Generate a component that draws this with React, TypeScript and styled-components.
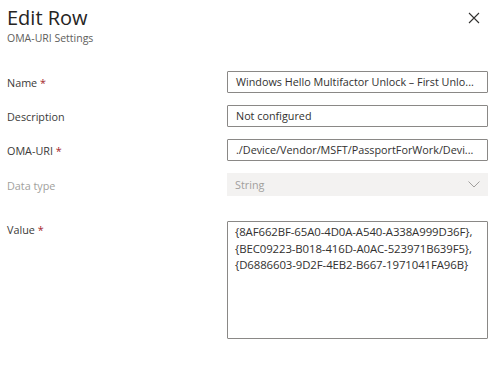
import React from "react";
import styled, { createGlobalStyle } from "styled-components";

const GlobalStyle = createGlobalStyle`
    html, body {
        margin: 0;
        padding: 0;
        background: #ffffff;
    }
    body {
        font-family: "Segoe UI", "Open Sans", "Noto Sans", sans-serif;
        color: #323130;
    }
`;

interface FieldRow {
    label: string;
    required?: boolean;
    disabled?: boolean;
    value: string;
    select?: boolean;
}

// values are shown as the panel shows them, already cut short
const rows: FieldRow[] = [
    { label: "Name", required: true, value: "Windows Hello Multifactor Unlock – First Unlo..." },
    { label: "Description", value: "Not configured" },
    { label: "OMA-URI", required: true, value: "./Device/Vendor/MSFT/PassportForWork/Devi..." },
    { label: "Data type", disabled: true, value: "String", select: true },
];

const guids = [
    "{8AF662BF-65A0-4D0A-A540-A338A999D36F},",
    "{BEC09223-B018-416D-A0AC-523971B639F5},",
    "{D6886603-9D2F-4EB2-B667-1971041FA96B}",
];

const App: React.FC = () => {
    return (
        <>
            <GlobalStyle />
            <Panel>
                <Header>
                    <Titles>
                        <Title>Edit Row</Title>
                        <Subtitle>OMA-URI Settings</Subtitle>
                    </Titles>
                    <CloseButton aria-label="Close">
                        <svg width="12" height="12" viewBox="0 0 12 12">
                            <path d="M1 1 L11 11 M11 1 L1 11" stroke="#323130" strokeWidth="1.1" fill="none" />
                        </svg>
                    </CloseButton>
                </Header>
                <Form>
                    {rows.map(({ label, required, disabled, value, select }) => (
                        <Row key={label}>
                            <Label disabled={disabled}>
                                {label}
                                {required && <Star> *</Star>}
                            </Label>
                            {select ? (
                                <SelectBox>
                                    <span>{value}</span>
                                    <svg width="12" height="7" viewBox="0 0 12 7">
                                        <path d="M0.5 0.5 L6 6 L11.5 0.5" stroke="#a19f9d" strokeWidth="1" fill="none" />
                                    </svg>
                                </SelectBox>
                            ) : (
                                <InputBox>{value}</InputBox>
                            )}
                        </Row>
                    ))}
                    <ValueRow>
                        <Label>
                            Value<Star> *</Star>
                        </Label>
                        <TextArea>
                            {guids.map(g => (
                                <div key={g}>{g}</div>
                            ))}
                        </TextArea>
                    </ValueRow>
                </Form>
            </Panel>
        </>
    );
};

const Panel = styled.div`
    width: 503px;
    height: 383px;
    box-sizing: border-box;
    padding: 6px 15px 0 7px;
    background: #ffffff;
`;

const Header = styled.div`
    display: flex;
    justify-content: space-between;
    align-items: flex-start;
`;

const Titles = styled.div`
    display: flex;
    flex-direction: column;
`;

const Title = styled.h1`
    margin: 0;
    font-size: 20px;
    font-weight: 400;
    line-height: 24px;
    color: #252423;
`;

const Subtitle = styled.div`
    font-size: 10.5px;
    line-height: 17px;
    color: #605e5c;
`;

const CloseButton = styled.button`
    border: none;
    background: none;
    padding: 0;
    margin: 6px 8px 0 0;
    width: 12px;
    height: 12px;
    display: flex;
`;

const Form = styled.div`
    display: flex;
    flex-direction: column;
    gap: 12px;
    margin-top: 24px;
`;

const Row = styled.div`
    display: grid;
    grid-template-columns: 220px 1fr;
    align-items: center;
`;

const ValueRow = styled.div`
    display: grid;
    grid-template-columns: 220px 1fr;
    align-items: start;
    margin-top: 13px;
`;

const Label = styled.div<{ disabled?: boolean }>`
    font-size: 10.8px;
    color: ${p => (p.disabled ? "#a19f9d" : "#3b3a39")};
    padding-top: 1px;
`;

const Star = styled.span`
    color: #a4262c;
`;

const InputBox = styled.div`
    height: 22px;
    box-sizing: border-box;
    border: 1px solid #8a8886;
    border-radius: 1px;
    padding: 0 8px;
    font-size: 10.8px;
    line-height: 20px;
    white-space: nowrap;
    overflow: hidden;
    color: #323130;
`;

const SelectBox = styled.div`
    height: 23px;
    box-sizing: border-box;
    background: #f3f2f1;
    padding: 0 8px;
    display: flex;
    align-items: center;
    justify-content: space-between;
    font-size: 10.8px;
    color: #a19f9d;
`;

const TextArea = styled.div`
    height: 118px;
    box-sizing: border-box;
    border: 1px solid #8a8886;
    border-radius: 1px;
    padding: 2px 7px;
    font-size: 11.4px;
    line-height: 16.5px;
    letter-spacing: -0.1px;
    color: #323130;
`;

export default App;
